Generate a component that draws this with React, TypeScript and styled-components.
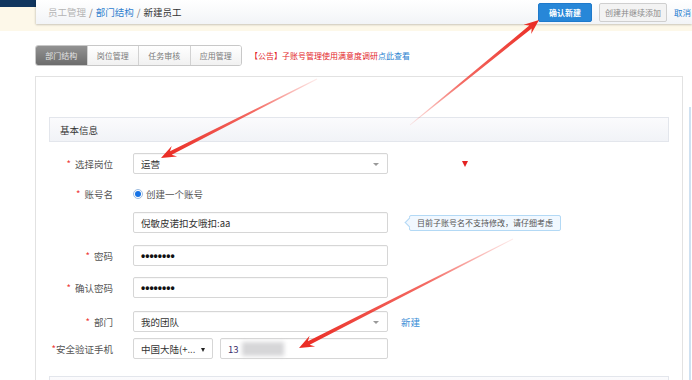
import React from 'react';
import styled, { createGlobalStyle } from 'styled-components';

type Pt = [number, number];

const GlobalStyle = createGlobalStyle`
  html, body {
    margin: 0;
    padding: 0;
    background: #fff;
    overflow: hidden;
  }
  body {
    font-family: "Noto Sans CJK SC", "Noto Sans", sans-serif;
  }
`;

const Page = styled.div`
  position: relative;
  width: 692px;
  height: 380px;
  overflow: hidden;
  background: #fff;
`;

const TopBar = styled.div`
  display: flex;
  align-items: flex-start;
  height: 31px;
  background: #fdf8e9;
`;

const NavyCorner = styled.div`
  width: 36px;
  height: 7px;
  flex-shrink: 0;
  background: #11365f;
`;

const Header = styled.header`
  flex: 1;
  height: 24px;
  display: flex;
  align-items: center;
  padding-left: 12px;
  background: linear-gradient(#ffffff, #f2f4f7);
  box-shadow: 0 1px 2px rgba(0, 0, 0, 0.18), -1px 0 2px rgba(0, 0, 0, 0.08);
  overflow: hidden;
  white-space: nowrap;
`;

const Crumbs = styled.div`
  flex: 1;
  font-size: 9.5px;
`;

const Crumb = styled.span<{ $tone: 'muted' | 'link' | 'current' }>`
  color: ${(p) => (p.$tone === 'muted' ? '#b4b4b4' : p.$tone === 'link' ? '#2f80cf' : '#333')};
`;

const Sep = styled.span`
  color: #777;
  margin: 0 3px;
`;

const HeaderActions = styled.div`
  display: flex;
  align-items: center;
  gap: 7px;
  padding-right: 1px;
`;

const Button = styled.button<{ $primary?: boolean }>`
  height: 19px;
  margin: 0;
  padding: 0 ${(p) => (p.$primary ? '10px' : '5px')};
  border: 1px solid ${(p) => (p.$primary ? '#1f7acb' : '#cfcfcf')};
  border-radius: 2px;
  background: ${(p) => (p.$primary ? '#2787d8' : '#f3f3f3')};
  color: ${(p) => (p.$primary ? '#fff' : '#8a8a8a')};
  font-family: inherit;
  font-size: 8px;
  font-weight: ${(p) => (p.$primary ? 700 : 400)};
  line-height: 17px;
`;

const CancelLink = styled.span`
  font-size: 8.5px;
  color: #2a7fd0;
`;

const Body = styled.div`
  display: flex;
`;

const Main = styled.div`
  flex: 1;
  padding: 14px 0 0 35px;
`;

const Rail = styled.div`
  width: 2px;
  height: 280px;
  margin: 76px 1px 0 6px;
  background: #cfe1f1;
`;

const TabsRow = styled.div`
  display: flex;
  align-items: center;
`;

const TabGroup = styled.div`
  display: flex;
  width: 207px;
  height: 21px;
  box-sizing: border-box;
  border: 1px solid #c8c8c8;
  border-radius: 3px;
  overflow: hidden;
`;

const Tab = styled.div<{ $active?: boolean }>`
  flex: 1;
  display: flex;
  align-items: center;
  justify-content: center;
  font-size: 8px;
  color: ${(p) => (p.$active ? '#e4e4e4' : '#7a7a7a')};
  background: ${(p) => (p.$active ? 'linear-gradient(#929292, #6c6c6c)' : 'linear-gradient(#ffffff, #f1f1f1)')};
  & + & {
    border-left: 1px solid #d2d2d2;
  }
`;

const Notice = styled.div`
  margin-left: 8px;
  font-size: 8px;
  color: #e3262a;
  white-space: nowrap;
`;

const NoticeLink = styled.span`
  color: #2a7fd0;
`;

const Panel = styled.section`
  margin-top: 10px;
  height: 310px;
  box-sizing: border-box;
  border: 1px solid #e2e2e2;
  border-bottom: none;
  padding: 40px 13px 0 13px;
`;

const SectionHead = styled.div<{ $gap?: number }>`
  height: 25px;
  margin-top: ${(p) => p.$gap ?? 0}px;
  box-sizing: border-box;
  display: flex;
  align-items: center;
  padding-left: 10px;
  border: 1px solid #e3e6ec;
  background: linear-gradient(#fbfbfd, #f1f3f7);
  font-size: 9.5px;
  color: #333;
`;

const Form = styled.div`
  padding-top: 11px;
`;

const Row = styled.div<{ $gap?: number }>`
  display: flex;
  align-items: center;
  height: 21px;
  margin-top: ${(p) => p.$gap ?? 0}px;
`;

const Label = styled.div`
  width: 64px;
  margin-right: 20px;
  text-align: right;
  font-size: 9.5px;
  color: #555;
  white-space: nowrap;
`;

const Star = styled.span<{ $tight?: boolean }>`
  color: #e33;
  margin-right: ${(p) => (p.$tight ? 0 : 4)}px;
`;

const Field = styled.div<{ $width?: number; $caret?: 'gray' | 'dark' }>`
  position: relative;
  width: ${(p) => p.$width ?? 255}px;
  height: 21px;
  box-sizing: border-box;
  display: flex;
  align-items: center;
  padding: 0 7px;
  border: 1px solid #d6d6d6;
  border-radius: 2px;
  background: #fff;
  box-shadow: inset 0 1px 1px rgba(0, 0, 0, 0.03);
  font-size: 9.5px;
  color: #333;
  white-space: nowrap;
  ${(p) =>
    p.$caret &&
    `
    &::after {
      content: '';
      position: absolute;
      right: ${p.$caret === 'dark' ? 7 : 8}px;
      top: 9px;
      border-left: ${p.$caret === 'dark' ? 2.5 : 3}px solid transparent;
      border-right: ${p.$caret === 'dark' ? 2.5 : 3}px solid transparent;
      border-top: ${p.$caret === 'dark' ? 4 : 3}px solid ${p.$caret === 'dark' ? '#222' : '#999'};
    }
  `}
`;

const Dots = styled.span`
  font-family: "Liberation Sans", Arial, sans-serif;
  font-size: 12px;
  font-weight: 700;
  color: #111;
`;

const PhoneStart = styled.span`
  color: #3b2f6b;
`;

const Smudge = styled.span`
  display: inline-block;
  width: 42px;
  height: 14px;
  margin-left: 3px;
  background: #d6d6d8;
  filter: blur(2px);
`;

const Gap = styled.div<{ $w: number }>`
  width: ${(p) => p.$w}px;
  flex-shrink: 0;
`;

const RedMark = styled.div`
  margin-left: 74px;
  width: 0;
  height: 0;
  border-left: 3.5px solid transparent;
  border-right: 3.5px solid transparent;
  border-top: 6px solid #e42222;
`;

const Radio = styled.span`
  width: 10px;
  height: 10px;
  box-sizing: border-box;
  border-radius: 50%;
  border: 1px solid #9dbce0;
  display: flex;
  align-items: center;
  justify-content: center;
  &::after {
    content: '';
    width: 6px;
    height: 6px;
    border-radius: 50%;
    background: #1673e6;
  }
`;

const RadioText = styled.span`
  margin-left: 3px;
  font-size: 9.5px;
  color: #555;
`;

const Tip = styled.div`
  position: relative;
  margin-left: 21px;
  height: 16px;
  box-sizing: border-box;
  display: flex;
  align-items: center;
  padding: 0 7px;
  border: 1px solid #b3d9f5;
  border-radius: 2px;
  background: #f1f8ff;
  font-size: 8px;
  color: #555;
  white-space: nowrap;
  &::before {
    content: '';
    position: absolute;
    left: -4px;
    top: 3.5px;
    width: 6px;
    height: 6px;
    background: #f1f8ff;
    border-left: 1px solid #b3d9f5;
    border-bottom: 1px solid #b3d9f5;
    transform: rotate(45deg);
  }
`;

const NewLink = styled.span`
  margin-left: 13px;
  font-size: 9.5px;
  color: #3a8ed6;
`;

const Overlay = styled.svg`
  position: absolute;
  left: 0;
  top: 0;
  pointer-events: none;
`;

// tapered red annotation arrow, thin at the tail and heavy at the head
const arrowPoints = (from: Pt, to: Pt) => {
  const dx = to[0] - from[0];
  const dy = to[1] - from[1];
  const len = Math.hypot(dx, dy);
  const ux = dx / len;
  const uy = dy / len;
  const nx = -uy;
  const ny = ux;
  const base: Pt = [to[0] - ux * 15, to[1] - uy * 15];
  const neck: Pt = [base[0] + ux * 4, base[1] + uy * 4];
  const pts: Pt[] = [
    [from[0] + nx * 0.4, from[1] + ny * 0.4],
    [neck[0] + nx * 1.9, neck[1] + ny * 1.9],
    [base[0] + nx * 6, base[1] + ny * 6],
    to,
    [base[0] - nx * 6, base[1] - ny * 6],
    [neck[0] - nx * 1.9, neck[1] - ny * 1.9],
    [from[0] - nx * 0.4, from[1] - ny * 0.4],
  ];
  return pts.map((p) => `${p[0].toFixed(1)},${p[1].toFixed(1)}`).join(' ');
};

const arrows: { id: string; from: Pt; to: Pt }[] = [
  { id: 'a1', from: [317, 79], to: [161, 158] },
  { id: 'a2', from: [410, 125], to: [539, 20] },
  { id: 'a3', from: [513, 239], to: [299, 348] },
];

const Annotations = () => (
  <Overlay width={692} height={380} viewBox="0 0 692 380">
    <defs>
      {arrows.map((a) => (
        <linearGradient
          key={a.id}
          id={a.id}
          gradientUnits="userSpaceOnUse"
          x1={a.from[0]}
          y1={a.from[1]}
          x2={a.to[0]}
          y2={a.to[1]}
        >
          <stop offset="0" stopColor="#f03a30" stopOpacity="0.1" />
          <stop offset="0.4" stopColor="#f03a30" stopOpacity="0.75" />
          <stop offset="1" stopColor="#ea2a22" stopOpacity="1" />
        </linearGradient>
      ))}
    </defs>
    {arrows.map((a) => (
      <polygon key={a.id} points={arrowPoints(a.from, a.to)} fill={`url(#${a.id})`} />
    ))}
  </Overlay>
);

const tabs = ['部门结构', '岗位管理', '任务审核', '应用管理'];

const App = () => {
  return (
    <Page>
      <GlobalStyle />
      <TopBar>
        <NavyCorner />
        <Header>
          <Crumbs>
            <Crumb $tone="muted">员工管理</Crumb>
            <Sep>/</Sep>
            <Crumb $tone="link">部门结构</Crumb>
            <Sep>/</Sep>
            <Crumb $tone="current">新建员工</Crumb>
          </Crumbs>
          <HeaderActions>
            <Button $primary>确认新建</Button>
            <Button>创建并继续添加</Button>
            <CancelLink>取消</CancelLink>
          </HeaderActions>
        </Header>
      </TopBar>

      <Body>
        <Main>
          <TabsRow>
            <TabGroup>
              {tabs.map((t, i) => (
                <Tab key={t} $active={i === 0}>
                  {t}
                </Tab>
              ))}
            </TabGroup>
            <Notice>
              【公告】子账号管理使用满意度调研<NoticeLink>点此查看</NoticeLink>
            </Notice>
          </TabsRow>

          <Panel>
            <SectionHead>基本信息</SectionHead>
            <Form>
              <Row>
                <Label>
                  <Star>*</Star>选择岗位
                </Label>
                <Field $caret="gray">运营</Field>
                <RedMark />
              </Row>
              <Row $gap={9}>
                <Label>
                  <Star>*</Star>账号名
                </Label>
                <Radio />
                <RadioText>创建一个账号</RadioText>
              </Row>
              <Row $gap={8}>
                <Gap $w={84} />
                <Field>倪敏皮诺扣女哦扣:aa</Field>
                <Tip>目前子账号名不支持修改，请仔细考虑</Tip>
              </Row>
              <Row $gap={12}>
                <Label>
                  <Star>*</Star>密码
                </Label>
                <Field>
                  <Dots>••••••••</Dots>
                </Field>
              </Row>
              <Row $gap={11}>
                <Label>
                  <Star>*</Star>确认密码
                </Label>
                <Field>
                  <Dots>••••••••</Dots>
                </Field>
              </Row>
              <Row $gap={13}>
                <Label>
                  <Star>*</Star>部门
                </Label>
                <Field $caret="gray">我的团队</Field>
                <NewLink>新建</NewLink>
              </Row>
              <Row $gap={6}>
                <Label>
                  <Star $tight>*</Star>安全验证手机
                </Label>
                <Field $width={80} $caret="dark">
                  中国大陆(+...
                </Field>
                <Gap $w={7} />
                <Field $width={168}>
                  <PhoneStart>13</PhoneStart>
                  <Smudge />
                </Field>
              </Row>
            </Form>
            <SectionHead $gap={17} />
          </Panel>
        </Main>
        <Rail />
      </Body>

      <Annotations />
    </Page>
  );
};

export default App;
